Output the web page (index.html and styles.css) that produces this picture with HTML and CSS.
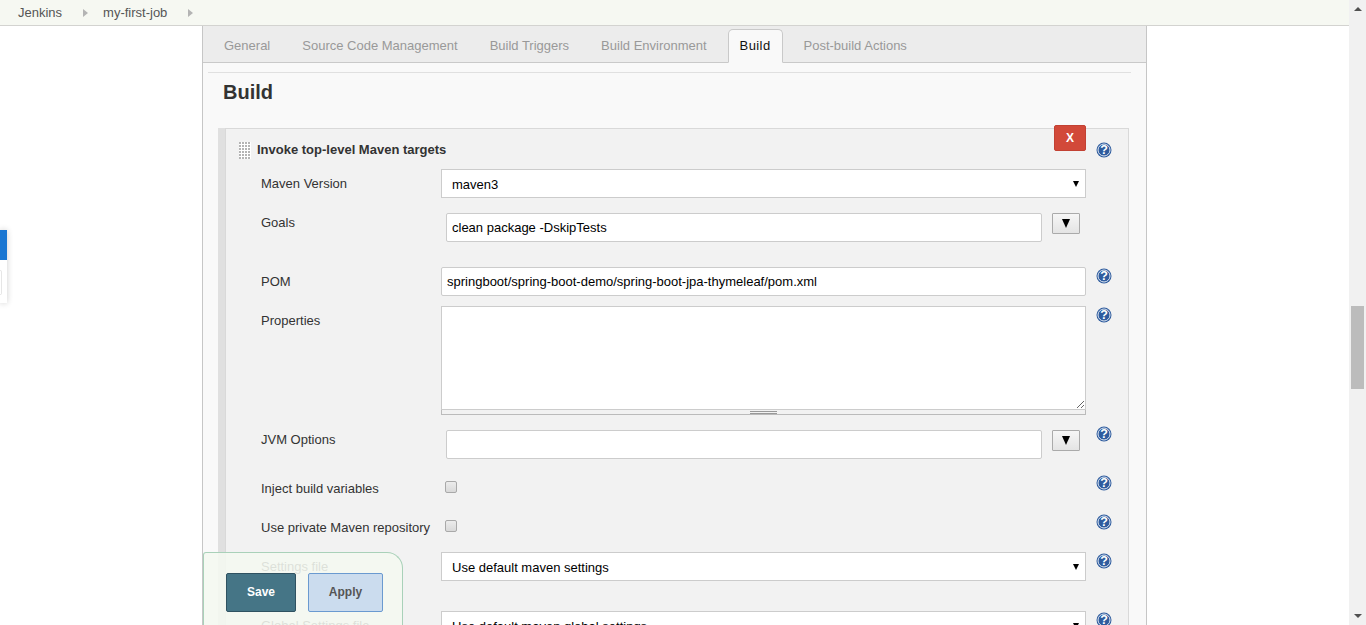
FILE: index.html
```html
<!DOCTYPE html>
<html lang="en">
	<head>
		<meta charset="UTF-8" />
		<title>my-first-job Config [Jenkins]</title>
		<link rel="stylesheet" href="styles.css">
	</head>
	<body>
		<svg class="defs" width="0" height="0">
			<symbol id="help" viewBox="0 0 16 16">
				<circle cx="8" cy="8" r="7.5" fill="#2f5c9e" />
				<circle cx="8" cy="8" r="6" fill="none" stroke="#dfe7f2" stroke-width="1" />
				<text x="8" y="12.4" text-anchor="middle" class="help-mark">?</text>
			</symbol>
		</svg>
		<div class="page">
			<div class="crumbs">
				<a class="crumb">Jenkins</a>
				<span class="crumb-arrow"></span>
				<a class="crumb">my-first-job</a>
				<span class="crumb-arrow"></span>
			</div>
			<div class="layout">
				<div class="side">
					<div class="side-widget">
						<div class="side-head"></div>
						<div class="side-body"><div class="side-inner"></div></div>
					</div>
				</div>
				<div class="panel">
					<div class="tabs">
						<a class="tab">General</a>
						<a class="tab">Source Code Management</a>
						<a class="tab">Build Triggers</a>
						<a class="tab">Build Environment</a>
						<a class="tab active">Build</a>
						<a class="tab">Post-build Actions</a>
					</div>
					<div class="content">
						<div class="rule"></div>
						<h2>Build</h2>
						<div class="step">
							<div class="step-box">
								<button class="delete">X</button>
								<div class="step-title">
									<span class="handle"></span>
									<b>Invoke top-level Maven targets</b>
									<svg class="help title-help"><use href="#help" /></svg>
								</div>

								<div class="row">
									<label>Maven Version</label>
									<div class="select">
										<select><option>maven3</option></select>
									</div>
								</div>

								<div class="row">
									<label>Goals</label>
									<div class="expand">
										<input type="text" value="clean package -DskipTests" />
										<button class="more"><span class="more-arrow"></span></button>
									</div>
								</div>

								<div class="row">
									<label>POM</label>
									<input class="wide" type="text" value="springboot/spring-boot-demo/spring-boot-jpa-thymeleaf/pom.xml" />
									<svg class="help"><use href="#help" /></svg>
								</div>

								<div class="row">
									<label>Properties</label>
									<div class="area">
										<textarea></textarea>
										<div class="grippie"><span></span></div>
									</div>
									<svg class="help"><use href="#help" /></svg>
								</div>

								<div class="row row-tight">
									<label>JVM Options</label>
									<div class="expand">
										<input type="text" />
										<button class="more"><span class="more-arrow"></span></button>
									</div>
									<svg class="help"><use href="#help" /></svg>
								</div>

								<div class="row">
									<label>Inject build variables</label>
									<div class="check"><input type="checkbox" /></div>
									<svg class="help"><use href="#help" /></svg>
								</div>

								<div class="row">
									<label>Use private Maven repository</label>
									<div class="check"><input type="checkbox" /></div>
									<svg class="help"><use href="#help" /></svg>
								</div>

								<div class="row row-far">
									<label>Settings file</label>
									<div class="select">
										<select><option>Use default maven settings</option></select>
									</div>
									<svg class="help"><use href="#help" /></svg>
								</div>

								<div class="row">
									<label>Global Settings file</label>
									<div class="select">
										<select><option>Use default maven global settings</option></select>
									</div>
									<svg class="help"><use href="#help" /></svg>
								</div>
							</div>
						</div>
					</div>
					<div class="savebar">
						<button class="save">Save</button>
						<button class="apply">Apply</button>
					</div>
				</div>
			</div>
		</div>
		<div class="scrollbar">
			<span class="sb-up"></span>
			<span class="sb-thumb"></span>
			<span class="sb-down"></span>
		</div>
	</body>
</html>
```

FILE: styles.css
```css
* {
	font-family: "Liberation Sans", Arial, sans-serif;
	box-sizing: border-box;
}
html,
body {
	margin: 0;
	height: 625px;
	overflow: hidden;
	background: #fff;
}
body {
	display: flex;
	font-size: 13px;
	color: #333;
}
.defs {
	position: absolute;
}
.help-mark {
	font-size: 12.5px;
	font-weight: bold;
	fill: #fff;
}
.page {
	flex: 1;
	min-width: 0;
	display: flex;
	flex-direction: column;
}

/* breadcrumbs */
.crumbs {
	height: 26px;
	flex: none;
	display: flex;
	align-items: center;
	padding-left: 18px;
	padding-bottom: 1px;
	background: #f6f8f2;
	border-bottom: 1px solid #d3d3d0;
}
.crumb {
	color: #555;
	font-size: 13px;
}
.crumb-arrow {
	width: 0;
	height: 0;
	margin: 1px 15px 0 21px;
	border-left: 5px solid #b4b4b4;
	border-top: 4px solid transparent;
	border-bottom: 4px solid transparent;
}

.layout {
	flex: 1;
	min-height: 0;
	display: flex;
}

/* left widget, only its edge is on screen */
.side {
	width: 202px;
	flex: none;
}
.side-widget {
	width: 7px;
	margin-top: 204px;
	box-shadow: 0 0 6px rgba(0, 0, 0, 0.2);
	background: #fff;
}
.side-head {
	height: 30px;
	background: #1976d2;
}
.side-body {
	height: 43px;
	padding-top: 10px;
}
.side-inner {
	width: 2px;
	height: 25px;
	border: 1px solid #e6e6e6;
	border-left: 0;
	border-radius: 0 2px 2px 0;
}

.panel {
	position: relative;
	width: 945px;
	flex: none;
	display: flex;
	flex-direction: column;
	border-left: 1px solid #c6c6c6;
	border-right: 1px solid #c6c6c6;
	background: #f9f9f9;
}

/* tabs */
.tabs {
	height: 37px;
	flex: none;
	display: flex;
	align-items: flex-end;
	padding-left: 10px;
	background: #ececec;
	border-bottom: 1px solid #c9c9c9;
}
.tab {
	height: 33px;
	margin-right: 10px;
	padding: 0 10px;
	line-height: 32px;
	font-size: 13px;
	color: #999;
	border: 1px solid transparent;
}
.tab.active {
	height: 34px;
	margin-bottom: -1px;
	padding: 0 11px;
	letter-spacing: 0.4px;
	color: #111;
	background: #f9f9f9;
	border-color: #c9c9c9;
	border-bottom-color: #f9f9f9;
	border-radius: 5px 5px 0 0;
}

.content {
	flex: 1;
	min-height: 0;
	overflow: hidden;
}
.rule {
	height: 1px;
	margin: 9px 15px 0 5px;
	background: #e0e0e0;
}
h2 {
	margin: 0;
	padding-left: 20px;
	height: 55px;
	padding-top: 7px;
	font-size: 20px;
	line-height: 24px;
	font-weight: bold;
	color: #333;
}

/* build step */
.step {
	margin: 0 17px 0 15px;
	border-left: 7px solid #e0e0e0;
}
.step-box {
	position: relative;
	padding: 13px 0 0 35px;
	background: #f2f2f2;
	border: 1px solid #d9d9d9;
	border-bottom: 0;
	min-height: 600px;
}
.delete {
	position: absolute;
	top: -4px;
	left: 828px;
	width: 32px;
	height: 26px;
	padding: 0;
	color: #fff;
	font-size: 12px;
	font-weight: bold;
	background: #d24939;
	border: 1px solid #c24133;
	border-radius: 2px;
}
.step-title {
	height: 17px;
	margin: 0 0 10px -22px;
	display: flex;
	align-items: center;
}
.step-title b {
	margin: -2px 0 0 6px;
	font-size: 13px;
	color: #333;
}
.title-help {
	position: absolute;
	top: 12px;
	left: 860px;
	margin: 0;
}
.handle {
	width: 12px;
	height: 17px;
	background: repeating-linear-gradient(90deg, transparent 0 2px, #fff 2px 3px),
		repeating-linear-gradient(0deg, transparent 0 2px, #fff 2px 3px), #b4b4b4;
}

.row {
	display: grid;
	grid-template-columns: 180px 645px 16px;
	column-gap: 0;
	min-height: 29px;
	margin-bottom: 10px;
}
.row-tight {
	margin-bottom: 0;
}
.row-far {
	margin-bottom: 30px;
}
.row label {
	padding-top: 7px;
	line-height: 15px;
	color: #333;
}
.help {
	width: 16px;
	height: 16px;
	margin: 1px 0 0 10px;
	overflow: visible;
}

/* fields */
input[type="text"],
select,
textarea {
	font-size: 13px;
	color: #000;
	background: #fff;
	border: 1px solid #ccc;
	outline: 0;
}
input[type="text"] {
	height: 29px;
	padding: 0 5px;
	border-radius: 2px;
}
.wide {
	width: 645px;
}
.select {
	position: relative;
	width: 645px;
}
.select select {
	display: block;
	width: 100%;
	height: 29px;
	padding: 1px 0 0 10px;
	border-radius: 0;
	appearance: none;
}
.select::after {
	content: "";
	position: absolute;
	top: 12px;
	right: 7px;
	border-top: 6px solid #000;
	border-left: 3.5px solid transparent;
	border-right: 3.5px solid transparent;
}
.expand {
	display: flex;
	align-items: flex-start;
	gap: 10px;
	padding: 5px 0 15px 5px;
}
.expand input[type="text"] {
	width: 596px;
}
.more {
	width: 28px;
	height: 21px;
	padding: 0;
	display: flex;
	align-items: center;
	justify-content: center;
	background: linear-gradient(#f6f6f6, #e4e4e4);
	border: 1px solid #aaa;
	border-radius: 1px;
}
.more-arrow {
	border-top: 9px solid #000;
	border-left: 4.5px solid transparent;
	border-right: 4.5px solid transparent;
}
.area {
	width: 645px;
}
.area textarea {
	display: block;
	width: 100%;
	height: 104px;
	resize: vertical;
	border-bottom-color: #ccc;
}
.grippie {
	height: 5px;
	display: flex;
	justify-content: center;
	background: #f2f2f2;
	border: 1px solid #bbb;
	border-top: 0;
}
.grippie span {
	width: 27px;
	height: 3px;
	margin-top: 1px;
	border-top: 1px solid #999;
	border-bottom: 1px solid #999;
}
.check {
	padding: 7px 0 0 4px;
}
.check input {
	display: block;
	width: 12px;
	height: 12px;
	margin: 0;
	appearance: none;
	background: linear-gradient(#ececec, #d9d9d9);
	border: 1px solid #a9a9a9;
	border-radius: 2px;
}

/* sticky save bar */
.savebar {
	position: absolute;
	left: 0;
	top: 526px;
	width: 200px;
	height: 73px;
	display: flex;
	align-items: flex-start;
	gap: 12px;
	padding: 20px 0 0 22px;
	background: rgba(244, 248, 240, 0.88);
	border: 1px solid #a9d1b9;
	border-bottom: 0;
	border-radius: 3px 16px 0 0;
}
.savebar button {
	height: 39px;
	padding: 0 0 2px;
	font-size: 12px;
	font-weight: bold;
	border-radius: 2px;
}
.save {
	width: 70px;
	color: #fff;
	background: #457586;
	border: 1px solid #2f5261;
}
.apply {
	width: 75px;
	color: #555;
	background: #cbdcee;
	border: 1px solid #6a9ad0;
}

/* scrollbar */
.scrollbar {
	width: 17px;
	flex: none;
	height: 625px;
	display: flex;
	flex-direction: column;
	align-items: center;
	background: #f1f1f1;
}
.sb-up {
	margin-top: 7px;
	border-bottom: 4px solid #505050;
	border-left: 4px solid transparent;
	border-right: 4px solid transparent;
}
.sb-thumb {
	width: 13px;
	height: 83px;
	margin-top: 295px;
	background: #bcbcbc;
}
.sb-down {
	margin-top: auto;
	margin-bottom: 7px;
	border-top: 4px solid #505050;
	border-left: 4px solid transparent;
	border-right: 4px solid transparent;
}
```
